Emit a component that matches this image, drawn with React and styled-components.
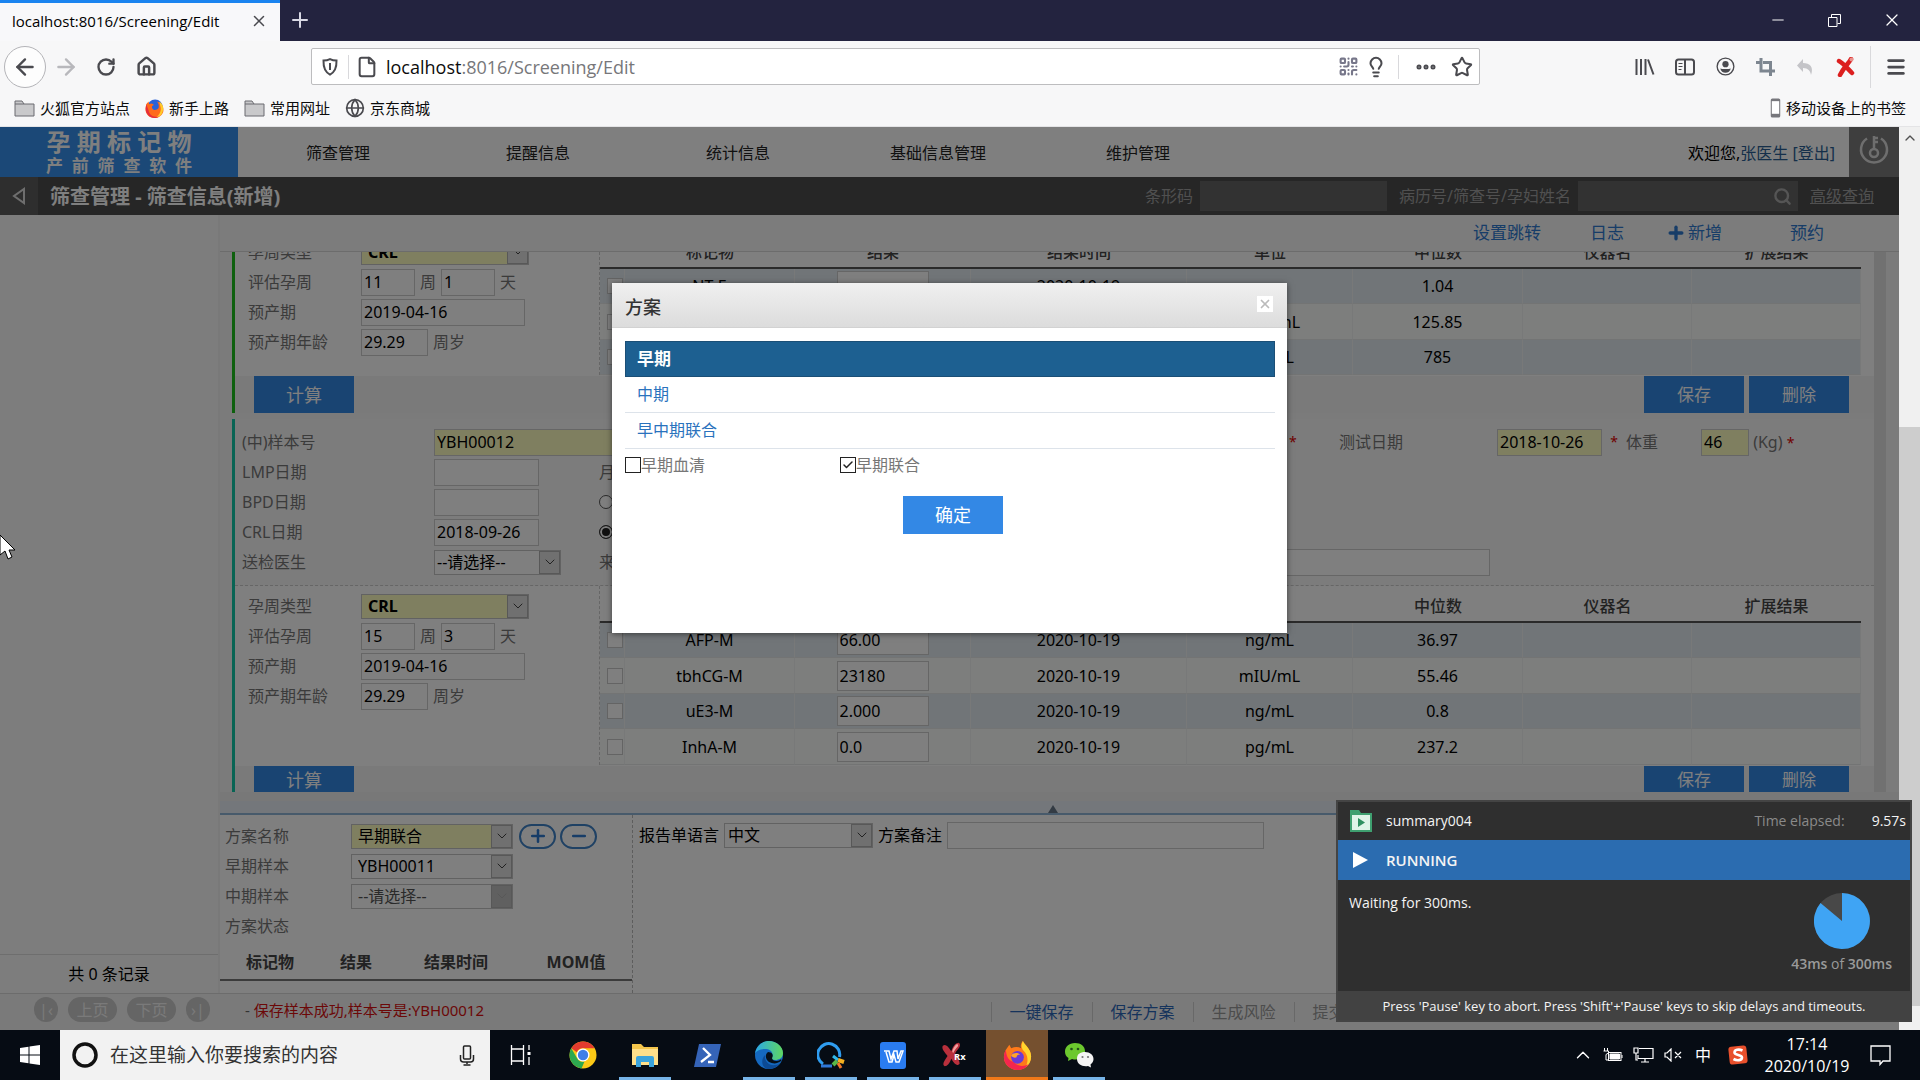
import React from "react";
import styled, { createGlobalStyle, css } from "styled-components";
import {
  ArrowLeft, ArrowRight, RotateCw, House, Star, Menu, Crop, Lightbulb, QrCode,
  File, Globe, Plus, X, Minus, Search, Mic, ChevronUp, ChevronDown, Ellipsis, Check,
} from "lucide-react";

const GlobalStyle = createGlobalStyle`
  *, *::before, *::after { box-sizing: border-box; }
  html, body { margin: 0; padding: 0; }
  body, button, input, select, table {
    font-family: "Noto Sans", "Noto Sans CJK SC", sans-serif;
    font-size: 16px;
    line-height: 20px;
  }
  button { cursor: pointer; }
  a { text-decoration: none; }
`;

const Desktop = styled.div`
  position: relative;
  display: flex;
  flex-direction: column;
  height: 100vh;
  overflow: hidden;
  background: #f7f7f8;
  color: #000;
`;

/* ---------- browser chrome ---------- */

const TabBar = styled.header`
  display: flex;
  align-items: stretch;
  height: 41px;
  background: #23233f;
`;
const Tab = styled.div`
  display: flex;
  align-items: center;
  justify-content: space-between;
  width: 280px;
  padding: 0 12px 2px;
  border-top: 3px solid #1a84f0;
  background: #f8f8fa;
  font-family: "Open Sans", "Noto Sans", sans-serif;
  font-size: 15px;
  white-space: nowrap;
`;
const ChromeButton = styled.button`
  display: inline-flex;
  align-items: center;
  justify-content: center;
  flex: none;
  width: ${(p) => p.$w || 40}px;
  height: ${(p) => p.$h || 40}px;
  padding: 0;
  border: 0;
  background: none;
  color: ${(p) => p.$color || "#4a4a4f"};
`;
const WindowControls = styled.div`
  display: flex;
  margin-left: auto;
`;
const NavBar = styled.div`
  display: flex;
  align-items: center;
  height: 51px;
  padding: 0 4px;
`;
const BackButton = styled(ChromeButton)`
  border: 1px solid #b4b4b8;
  border-radius: 50%;
  background: #fdfdfd;
`;
const AddressBar = styled.div`
  display: flex;
  align-items: center;
  flex: 1;
  height: 37px;
  margin: 0 145px;
  padding-left: 6px;
  border: 1px solid #bdbdbf;
  border-radius: 2px;
  background: #fff;
`;
const Address = styled.div`
  flex: 1;
  padding-left: 7px;
  color: #77777a;
  font-family: "Open Sans", "Noto Sans", sans-serif;
  font-size: 18px;
  line-height: 24px;
  b { font-weight: 400; color: #0c0c0d; }
`;
const ThinRule = styled.i`
  width: 1px;
  height: ${(p) => p.$h || 24}px;
  margin: 0 ${(p) => p.$gap || 0}px;
  background: #d9d9dc;
`;
const ToolGroup = styled.div`
  display: flex;
  align-items: center;
`;
const BookmarkBar = styled.nav`
  display: flex;
  align-items: center;
  gap: 15px;
  height: 35px;
  padding: 0 14px 2px;
  border-bottom: 1px solid #e4e4e6;
`;
const Bookmark = styled.a`
  display: flex;
  align-items: center;
  gap: 5px;
  margin-left: ${(p) => (p.$end ? "auto" : 0)};
  color: #0c0c0d;
  font-size: 15px;
`;

/* ---------- web page ---------- */

const Viewport = styled.div`
  display: flex;
  flex: 1;
  min-height: 0;
`;
const PageArea = styled.div`
  position: relative;
  display: flex;
  flex: 1;
  flex-direction: column;
  min-width: 0;
  background: #f8f8f8;
`;
const Scrollbar = styled.div`
  display: flex;
  flex-direction: column;
  width: 21px;
  background: #f0f0f0;
  color: #505050;
`;
const ScrollGap = styled.div`
  display: flex;
  justify-content: center;
  flex: ${(p) => p.$grow};
  padding-top: 3px;
`;
const ScrollThumb = styled.div`
  flex: 583;
  background: #cdcdcd;
`;
const AppHeader = styled.header`
  display: flex;
  align-items: stretch;
  height: 50px;
  background: #fff;
`;
const Brand = styled.div`
  display: flex;
  flex-direction: column;
  justify-content: center;
  width: 238px;
  background: #3690ee;
  color: #fff;
  font-weight: 700;
  text-align: center;
  white-space: pre;
`;
const BrandTop = styled.div`
  font-size: 24px;
  line-height: 28px;
`;
const BrandSub = styled.div`
  font-size: 17px;
  line-height: 20px;
`;
const MainNav = styled.nav`
  display: flex;
  flex: 1;
`;
const NavLink = styled.a`
  width: 200px;
  color: #222;
  line-height: 52px;
  text-align: center;
`;
const Welcome = styled.div`
  margin-right: 14px;
  line-height: 52px;
  a { color: #2a5f95; }
`;
const PowerButton = styled.button`
  width: 50px;
  padding: 0;
  border: 0;
  background: #7c7c7c;
  color: #ddd;
`;
const TitleBar = styled.div`
  display: flex;
  align-items: stretch;
  height: 38px;
  background: #4c4c4c;
  color: #a0a0a0;
  line-height: 38px;
`;
const CollapseButton = styled.button`
  display: flex;
  align-items: center;
  justify-content: center;
  width: 38px;
  padding: 0;
  border: 0;
  background: #5c5c5c;
`;
const PageTitle = styled.h1`
  flex: 1;
  margin: 0 0 0 12px;
  color: #fff;
  font-size: 20px;
  font-weight: 700;
  line-height: 40px;
`;
const SearchField = styled.label`
  display: flex;
  align-items: center;
  gap: 7px;
  margin-right: 12px;
`;
const SearchInputBox = styled.span`
  display: flex;
  align-items: center;
  width: ${(p) => p.$w}px;
  height: 30px;
  padding-right: 6px;
  background: #646464;
`;
const BareInput = styled.input`
  flex: 1;
  min-width: 0;
  height: 100%;
  border: 0;
  outline: 0;
  background: transparent;
  color: #eee;
`;
const AdvancedLink = styled.a`
  margin-right: 25px;
  color: #a0a0a0;
  text-decoration: underline;
`;

const Workspace = styled.div`
  display: grid;
  grid-template-columns: 220px 1fr;
  flex: 1;
  min-height: 0;
`;
const Sidebar = styled.aside`
  display: flex;
  flex-direction: column;
  justify-content: flex-end;
  border-right: 2px solid #f2f2f2;
  background: #fafafa;
`;
const RecordCount = styled.div`
  border-top: 1px solid #dcdcdc;
  line-height: 38px;
  text-align: center;
`;
const Main = styled.main`
  display: flex;
  flex-direction: column;
  min-width: 0;
  min-height: 0;
`;
const Toolbar = styled.div`
  display: flex;
  align-items: center;
  justify-content: flex-end;
  height: 37px;
  padding-right: 75px;
  border-bottom: 1px solid #d8d8d8;
  font-size: 17px;
`;
const ToolbarLink = styled.a`
  display: flex;
  align-items: center;
  gap: 2px;
  margin-left: ${(p) => p.$ml}px;
  color: #2f7ad0;
`;
const ScrollRegion = styled.div`
  display: grid;
  grid-template-columns: 1fr 12px 13px;
  flex: 1;
  min-height: 0;
  padding-left: 12px;
  overflow: hidden;
  background: #f6f6f6;
`;
const ScrollContent = styled.div`
  min-width: 0;
  margin-top: -20px;
`;
const ScrollTrack = styled.div`
  background: #e2e2e2;
`;
const Sample = styled.section`
  margin-bottom: 6px;
  border-left: 3px solid ${(p) => p.$accent};
  background: #fff;
`;
const SampleForm = styled.div`
  display: flex;
  flex-direction: column;
  padding: 8px 0 8px 7px;
  border-bottom: 1px dashed #ccc;
  background: #f9f9f9;
`;
const FormRow = styled.div`
  display: grid;
  grid-template-columns: ${(p) => p.$cols};
  align-items: center;
  height: 30px;
`;
const SampleBody = styled.div`
  display: grid;
  grid-template-columns: 365px 1fr;
  padding: 0 13px 1px 0;
`;
const WeekForm = styled.div`
  padding: 5px 0 0 13px;
  border-right: 1px dashed #ccc;
`;
const WeekRow = styled.div`
  display: flex;
  align-items: center;
  gap: 5px;
  height: 30px;
`;
const SampleFooter = styled.div`
  display: flex;
  gap: 5px;
  height: 37px;
  padding: 0 25px 0 19px;
  background: #f5f5f5;
`;
const Label = styled.label`
  color: #777;
  white-space: nowrap;
  ${(p) => p.$w && css`width: ${p.$w}px;`}
`;
const Field = styled.input`
  width: ${(p) => (p.$w ? p.$w + "px" : "100%")};
  height: ${(p) => p.$h || 27}px;
  padding: 0 2px;
  border: 1px solid #ccc;
  outline: 0;
  background: ${(p) => (p.$hot ? "#ffffc0" : "#fff")};
  color: #000;
`;
const Required = styled.span`
  color: #e00000;
  font-size: 14px;
  text-align: center;
`;
const FieldRequired = styled(Required)`
  padding-left: 4px;
  text-align: left;
`;
const PrimaryButton = styled.button`
  width: 100px;
  height: ${(p) => p.$h || 37}px;
  margin-right: ${(p) => (p.$push ? "auto" : 0)};
  padding: 0;
  border: 0;
  background: #3388e5;
  color: #fff;
  font-size: ${(p) => p.$size || 17}px;
`;
const SelectBox = styled.span`
  display: inline-flex;
  width: ${(p) => p.$w}px;
  height: 25px;
  border: 1px solid #c4c4c4;
  background: ${(p) => (p.$hot ? "#ffffc0" : "#fff")};
`;
const SelectNative = styled.select`
  flex: 1;
  min-width: 0;
  padding: 0 0 0 ${(p) => p.$pad || 6}px;
  border: 0;
  outline: 0;
  appearance: none;
  background: transparent;
  color: ${(p) => (p.$off ? "#555" : "#000")};
  font-weight: ${(p) => (p.$strong ? 700 : 400)};
  opacity: 1;
`;
const SelectArrow = styled.span`
  display: flex;
  align-items: center;
  justify-content: center;
  width: 21px;
  border: 1px solid #b0b0b0;
  background: ${(p) => (p.$off ? "#c0c0c0" : "#e0e0e0")};
  color: ${(p) => (p.$off ? "#b0b0b0" : "#444")};
`;
const MarkerTable = styled.table`
  width: 100%;
  border-collapse: separate;
  border-spacing: 0;
  table-layout: fixed;
  th {
    height: 37px;
    padding: 4px 0 0;
    border-bottom: 2px solid #555;
    color: #444;
    font-weight: 500;
  }
  td {
    height: 35px;
    padding: 0;
    border-right: 1px solid #f0f3f3;
    border-bottom: 1px solid #e6e9e9;
    text-align: center;
  }
  tbody tr:nth-child(odd) td { background: #e3ebf0; }
  tbody tr:nth-child(even) td { height: 36px; background: #fbfdfb; }
  tbody td:first-child { background: #f8fafa; }
`;
const MarkerCheck = styled.input`
  display: block;
  width: 16px;
  height: 16px;
  margin: 0 0 0 7px;
  border: 1px solid #c8c8c8;
  appearance: none;
  background: #fff;
`;
const Radio = styled.input`
  width: 14px;
  height: 14px;
  margin: 0;
  border: 1px solid #555;
  border-radius: 50%;
  appearance: none;
  background: #fff;
  &:checked { border-color: #333; background: #222; box-shadow: inset 0 0 0 2px #fff; }
`;
const Splitter = styled.div`
  display: flex;
  align-items: flex-end;
  justify-content: center;
  flex: none;
  height: 23px;
  padding-right: 13px;
  border-bottom: 2px solid #8fb4d6;
  background: linear-gradient(#f0f0f0 9px, #e9eff6 9px);
  color: #667788;
`;
const PlanPanel = styled.section`
  display: grid;
  grid-template-columns: 413px 1fr;
  flex: none;
  height: 178px;
  background: #fff;
`;
const PlanForm = styled.div`
  padding: 6px 0 0;
  border-right: 1px dashed #bbb;
`;
const PlanRow = styled(WeekRow)`
  gap: 6px;
  padding-left: 5px;
`;
const RoundButton = styled.button`
  display: flex;
  align-items: center;
  justify-content: center;
  width: 37px;
  height: 25px;
  margin-right: -2px;
  padding: 0;
  border: 2px solid #3f83c8;
  border-radius: 13px;
  background: #fff;
  color: #2f7ad0;
`;
const PlanTable = styled.table`
  width: 100%;
  margin-top: 1px;
  border-collapse: collapse;
  table-layout: fixed;
  th {
    height: 38px;
    padding: 3px 0 0;
    border-bottom: 2px solid #777;
    color: #444;
    font-weight: 700;
  }
`;
const PlanOptions = styled.div`
  display: flex;
  align-items: center;
  gap: 5px;
  height: 30px;
  margin: 5px 0 0 6px;
`;
const AppFooter = styled.footer`
  display: grid;
  grid-template-columns: 220px 1fr 1fr;
  align-items: center;
  height: 37px;
  border-top: 1px solid #d8d8d8;
  background: #f4f4f4;
`;
const Pager = styled.div`
  display: flex;
  align-items: center;
  gap: 10px;
  padding: 0 0 5px 34px;
`;
const PagerButton = styled.button`
  width: ${(p) => p.$w}px;
  height: 25px;
  padding: 0;
  border: 0;
  border-radius: 13px;
  background: #cacaca;
  color: #f4f4f4;
  white-space: nowrap;
`;
const StatusText = styled.div`
  padding: 0 0 4px 25px;
  color: #d81010;
  font-size: 15px;
  span { color: #666; }
`;
const FooterActions = styled.div`
  display: flex;
  margin-left: -69px;
`;
const FooterLink = styled.a`
  width: 101px;
  border-left: 1px solid #d0d0d0;
  color: ${(p) => (p.$off ? "#999" : "#2b66b8")};
  text-align: center;
`;

/* ---------- dialog ---------- */

const Backdrop = styled.div`
  position: absolute;
  inset: 0;
  display: flex;
  align-items: flex-start;
  justify-content: center;
  padding-top: 156px;
  background: rgba(0, 0, 0, 0.5);
`;
const Dialog = styled.section`
  width: 675px;
  min-height: 350px;
  background: #fff;
  box-shadow: 0 1px 6px rgba(0, 0, 0, 0.5);
`;
const DialogHeader = styled.header`
  display: flex;
  align-items: flex-start;
  justify-content: space-between;
  height: 45px;
  padding: 13px 14px 0 13px;
  border-bottom: 1px solid #d2d2d2;
  background: linear-gradient(#f0f0f0, #dcdcdc);
`;
const DialogTitle = styled.h2`
  margin: 0;
  color: #333;
  font-size: 18px;
  font-weight: 500;
  line-height: 22px;
`;
const CloseButton = styled.button`
  display: flex;
  align-items: center;
  justify-content: center;
  width: 16px;
  height: 16px;
  padding: 0;
  border: 0;
  background: #fff;
  color: #bbb;
`;
const DialogBody = styled.div`
  padding: 13px 12px 0 13px;
`;
const StageButton = styled.button`
  display: block;
  width: 100%;
  height: 36px;
  padding: 0 12px 2px;
  border: 0;
  border-bottom: 1px solid #dde3ea;
  background: none;
  color: #2a72bd;
  text-align: left;
  ${(p) => p.$active && css`
    padding: 0 11px;
    border: 1px solid #1b4f76;
    background: #1d6091;
    color: #fff;
    font-size: 17px;
    font-weight: 700;
  `}
`;
const CheckRow = styled.div`
  display: grid;
  grid-template-columns: 215px 1fr;
  margin-top: 6px;
`;
const CheckLabel = styled.label`
  display: flex;
  align-items: center;
  height: 20px;
  color: #777;
`;
const CheckBox = styled.span`
  position: relative;
  display: flex;
  width: 16px;
  height: 16px;
  input {
    width: 16px;
    height: 16px;
    margin: 0;
    border: 1px solid #222;
    appearance: none;
    background: #fff;
  }
  svg { position: absolute; inset: 2px; pointer-events: none; }
`;
const DialogActions = styled.div`
  display: flex;
  justify-content: center;
  padding: 21px 0 0 6px;
`;

/* ---------- automation popup ---------- */

const Popup = styled.aside`
  position: absolute;
  right: 8px;
  bottom: 58px;
  width: 576px;
  border: 2px solid #444;
  background: #2f2f2f;
  color: #f4f4f4;
  font-family: "Open Sans", "Noto Sans", sans-serif;
  font-size: 14px;
`;
const PopupHead = styled.div`
  display: flex;
  align-items: center;
  height: 38px;
  padding: 0 4px 0 11px;
  gap: 13px;
  span { margin-left: auto; padding-right: 14px; color: #8a8a8a; }
`;
const PopupState = styled.div`
  display: flex;
  align-items: center;
  gap: 18px;
  height: 40px;
  padding-left: 15px;
  background: #2b6cb0;
  font-size: 15px;
  font-weight: 600;
`;
const PopupBody = styled.div`
  display: flex;
  justify-content: space-between;
  height: 111px;
  padding: 13px 18px 0 11px;
`;
const Progress = styled.div`
  display: flex;
  flex-direction: column;
  align-items: center;
  gap: 5px;
  color: #9a9a9a;
  b { font-weight: 600; }
`;
const PopupFoot = styled.div`
  height: 29px;
  background: #424242;
  font-size: 13px;
  line-height: 30px;
  text-align: center;
`;

/* ---------- taskbar ---------- */

const Taskbar = styled.footer`
  display: flex;
  align-items: stretch;
  flex: none;
  height: 50px;
  background: #060c14;
  color: #fff;
`;
const TaskSearch = styled.label`
  display: flex;
  align-items: center;
  gap: 12px;
  width: 430px;
  padding: 0 15px 0 12px;
  background: #f2f2f2;
  color: #222;
  input {
    flex: 1;
    min-width: 0;
    padding: 0;
    border: 0;
    outline: 0;
    background: none;
    color: #222;
    font-size: 19px;
    line-height: 26px;
  }
  input::placeholder { color: #333; opacity: 1; }
`;
const TaskButton = styled.button`
  display: flex;
  align-items: center;
  justify-content: center;
  width: 62px;
  padding: 3px 0 0;
  border: 0;
  border-bottom: 3px solid transparent;
  border-image: ${(p) => (p.$open ? "linear-gradient(90deg, transparent 6px, #76b4e8 6px, #76b4e8 56px, transparent 56px) 1" : "none")};
  background: none;
  color: #fff;
  ${(p) => p.$current && css`
    border-image: none;
    border-bottom-color: #f07818;
    background: #75502f;
  `}
`;
const Tray = styled.div`
  display: flex;
  align-items: center;
  margin-left: auto;
  padding-right: 16px;
`;
const TrayItem = styled.span`
  display: flex;
  justify-content: center;
  width: ${(p) => p.$w || 30}px;
`;
const Clock = styled.time`
  width: 98px;
  font-family: "Open Sans", sans-serif;
  font-size: 16px;
  line-height: 22px;
  text-align: center;
`;
const Pointer = styled.svg`
  position: absolute;
  left: 0;
  top: 534px;
`;

/* ---------- small drawings ---------- */

const FolderIcon = () => (
  <svg width="21" height="18" viewBox="0 0 21 18">
    <path d="M1 2h7l2 3h10v12H1z" fill="#c9c9cb" stroke="#6b6b70" />
    <path d="M1 5h9" stroke="#6b6b70" />
  </svg>
);
const FirefoxIcon = ({ size = 20 }) => (
  <svg width={size} height={size} viewBox="0 0 32 32">
    <path d="M3 10 7 4l2 4c4-2 8-2 11 0-1-3 0-6 2-8 1 4 9 8 9 17 0 9-7 15-15 15S1 26 1 18c0-3 1-6 2-8z" fill="#ff7a1a" />
    <path d="M22 0c1 4 9 8 9 17 0 5-2 9-6 12 3-6 3-13-2-18-3-3-3-7-1-11z" fill="#ffd52e" />
    <path d="M1 18c0 8 7 14 15 14 6 0 10-3 13-7-6 4-14 3-17-2C5 22 4 16 3 10c-1 2-2 5-2 8z" fill="#f5264e" />
    <circle cx="16" cy="18" r="7" fill="#6a3ad8" />
    <path d="M9 16c3-4 8-3 10-1-3 0-4 1-4 3-2 1-5 0-6-2z" fill="#ffa52a" />
  </svg>
);
const OldFirefoxIcon = () => (
  <svg width="19" height="19" viewBox="0 0 32 32">
    <circle cx="17" cy="14" r="13" fill="#2b62d8" />
    <path d="M2 9l4-5 1 5c4-3 6-1 8 1-3 1-4 3-3 5 2 5 8 4 11 0 1-6-1-9-3-11 8 2 12 9 11 16-1 7-8 12-15 12C7 32 0 25 1 16z" fill="#ff6a1a" />
    <path d="M24 4c6 4 8 11 6 16-1 6-6 10-11 11 6-5 9-12 7-18z" fill="#ffcb2b" />
    <path d="M1 16c0 9 7 16 15 16 3 0 5 0 7-2-9 1-16-3-17-11L2 9z" fill="#e62e3a" />
  </svg>
);
const PhoneIcon = () => (
  <svg width="11" height="20" viewBox="0 0 10 19">
    <rect x="0.5" y="0.5" width="9" height="18" rx="1.5" fill="#77777c" />
    <rect x="1.5" y="3" width="7" height="12" fill="#fff" />
  </svg>
);
const ShieldIcon = () => (
  <svg width="16" height="18" viewBox="0 0 16 18" fill="none" stroke="#4a4a4f" strokeWidth="2">
    <path d="M8 1.2c2 1 4 1.400 6.500 1.400C14.700 9 13 14 8 16.600 3 14 1.300 9 1.500 2.600 4 2.600 6 2.200 8 1.200z" />
    <path d="M8 5v7" />
  </svg>
);
const LibraryIcon = () => (
  <svg width="20" height="18" viewBox="0 0 20 18" stroke="#4a4a4f" strokeWidth="2" fill="none">
    <path d="M1.500 1v16M6 1v16M10.500 1v16M13 1.500l5.500 15" />
  </svg>
);
const SidebarIcon = () => (
  <svg width="20" height="18" viewBox="0 0 20 18" fill="none" stroke="#4a4a4f" strokeWidth="2">
    <rect x="1" y="1.500" width="18" height="15" rx="2.500" />
    <path d="M10 2v14" />
    <path d="M3.500 5.500h4M3.500 8.500h4M3.500 11.500h3" strokeWidth="1.200" />
  </svg>
);
const AccountIcon = () => (
  <svg width="19" height="19" viewBox="0 0 20 20">
    <circle cx="10" cy="10" r="8.800" fill="none" stroke="#4a4a4f" strokeWidth="1.400" />
    <circle cx="10" cy="7.500" r="3.300" fill="#4a4a4f" />
    <path d="M4.500 12c2 1 9 1 11 0-.5 3-3 4.500-5.500 4.500S5 15 4.500 12z" fill="#4a4a4f" />
  </svg>
);
const CropIcon = () => (
  <svg width="19" height="18" viewBox="0 0 19 18" fill="none" stroke="#7d8690" strokeWidth="3">
    <path d="M5 0v13h9M0 4.500h4M7 4.500h7.500V18M14.500 13H19" />
  </svg>
);
const UndoIcon = () => (
  <svg width="19" height="18" viewBox="0 0 19 18">
    <path d="M7 1v4c7 0 11 4 8 12-.5-4-3-7-8-7v4L1 7.500z" fill="#c4c4c8" />
  </svg>
);
const RedXIcon = ({ rx }) => (
  <svg width={rx ? 28 : 19} height={rx ? 28 : 20} viewBox={rx ? "0 0 30 28" : "0 0 19 20"}>
    {rx ? (
      <>
        <path d="M2 4c3-2 5 0 9 6 2-5 4-9 8-9 2 1 2 4-1 7-2 2-3 4-3 6 3 4 5 6 5 9-2 3-5 2-9-5-2 5-4 8-7 8-3-2-1-5 3-11C4 11 0 7 2 4z" fill="#b8303c" />
        <path d="M16 3c2-1 3 0 2 2-2 2-4 5-5 7l-1-2c1-3 2-5 4-7z" fill="#f4a0a0" />
        <text x="14" y="19" fill="#fff" fontSize="10" fontWeight="700" fontFamily="Open Sans, sans-serif">Rx</text>
      </>
    ) : (
      <>
        <path d="M3 4c4 2 8 7 13 12M15 2C13 6 8 10 4 18" fill="none" stroke="#dc1f1f" strokeWidth="4.500" strokeLinecap="round" />
        <circle cx="15.500" cy="2.500" r="2" fill="#e8908c" />
      </>
    )}
  </svg>
);
const RestoreIcon = () => (
  <svg width="13" height="13" viewBox="0 0 13 13" fill="none" stroke="#fff">
    <path d="M.5 3.500h8.500v9H.5zM3.500 3V.5h9V9.500H9.500" />
  </svg>
);
const PowerKeyIcon = () => (
  <svg width="32" height="32" viewBox="0 0 32 32" fill="none" stroke="currentColor" strokeWidth="2.500">
    <path d="M9 4.500a13 13 0 1 0 14 0" />
    <circle cx="16" cy="19" r="4" />
    <path d="M16 15V2M16 4h4M16 8h4" />
  </svg>
);
const WindowsIcon = () => (
  <svg width="20" height="20" viewBox="0 0 20 20" fill="#fff">
    <path d="M0 3l8.500-1.200V9.500H0zM9.500 1.600 20 0v9.500H9.500zM0 10.500h8.500v7.700L0 17zM9.500 10.500H20V20L9.500 18.400z" />
  </svg>
);
const MicIcon = () => (
  <svg width="16" height="21" viewBox="0 0 16 21" fill="none" stroke="#222" strokeWidth="1.500">
    <rect x="4.500" y="1" width="7" height="13" rx="1" />
    <path d="M1.500 10v4q0 3 3 3h7q3 0 3-3v-4M8 17v2M4.500 20h7" />
  </svg>
);
const TaskViewIcon = () => (
  <svg width="22" height="20" viewBox="0 0 22 20" fill="none" stroke="#fff" strokeWidth="1.300">
    <path d="M1.500 0v4h12V0M1.500 20v-4h12v4M1.500 4v12M13.500 4v12M19 0v5M19 12v8" />
    <path d="M17.500 7h3v3h-3z" fill="#fff" stroke="none" />
  </svg>
);
const ChromeIcon = () => (
  <svg width="28" height="28" viewBox="0 0 28 28">
    <circle cx="14" cy="14" r="13.500" fill="#fbc916" />
    <path d="M14 .5a13.500 13.500 0 0 1 11.700 6.750H14a6.750 6.750 0 0 0-6.200 4L2.300 7.250A13.500 13.500 0 0 1 14 .5z" fill="#e33b2e" />
    <path d="M2.300 7.250 8.200 17.400A6.750 6.750 0 0 0 15.500 20.600L12.500 27.400A13.500 13.500 0 0 1 2.300 7.250z" fill="#2da94f" />
    <circle cx="14" cy="14" r="6.500" fill="#fff" />
    <circle cx="14" cy="14" r="5.200" fill="#3f7fe8" />
  </svg>
);
const ExplorerIcon = () => (
  <svg width="28" height="24" viewBox="0 0 28 24">
    <path d="M1 1h9l3 3h14v18H1z" fill="#f4c64c" />
    <path d="M1 6h26v16H1z" fill="#ffe08a" />
    <path d="M5 24v-9q0-2 2-2h14q2 0 2 2v9h-5v-5h-8v5z" fill="#3ba4dc" />
  </svg>
);
const PowerShellIcon = () => (
  <svg width="27" height="23" viewBox="0 0 27 23">
    <path d="M5 0h22l-5 23H0z" fill="#3564b8" />
    <path d="M9 4l7 7-9 7M14 18h6" fill="none" stroke="#fff" strokeWidth="2.300" />
  </svg>
);
const EdgeIcon = () => (
  <svg width="30" height="30" viewBox="0 0 30 30">
    <defs>
      <linearGradient id="edgeTop" x1="0" x2="1"><stop offset="0" stopColor="#2aa8e8" /><stop offset="1" stopColor="#5fd860" /></linearGradient>
    </defs>
    <circle cx="15" cy="15" r="14" fill="#1569c0" />
    <path d="M1 14C2 6 8 1 15 1s14 5 14 12c0 5-4 7-8 7-3 0-4-1-3-3 2-5-2-8-7-8S2 11 1 14z" fill="url(#edgeTop)" />
    <path d="M11 15c-1 6 4 11 10 10 3 0 5-2 6-4-2 5-7 8-12 8C8 29 6 20 11 15z" fill="#0c4a94" />
    <path d="M14 12c-3 2-3 7 1 10 4 2 8 2 12-1 1-1 0-2-1-1-3 2-8 1-8-2 2-3 0-6-4-6z" fill="#061019" />
  </svg>
);
const SearchAppIcon = () => (
  <svg width="29" height="28" viewBox="0 0 29 28" fill="none">
    <path d="M6 23A11 11 0 1 1 22.500 16" stroke="#2f9df0" strokeWidth="3" />
    <path d="M4 25h11" stroke="#2f78d8" strokeWidth="3" />
    <path d="M16 15l5 4" stroke="#30b8e8" strokeWidth="3" />
    <path d="M21 19l6 2" stroke="#f4b020" strokeWidth="4" />
    <path d="M20 20l-4 4" stroke="#58b848" strokeWidth="4" />
    <path d="M21 22l3 5" stroke="#f07828" strokeWidth="3" />
  </svg>
);
const WpsIcon = () => (
  <svg width="26" height="27" viewBox="0 0 26 27">
    <rect width="26" height="27" rx="3" fill="#2a7cf0" />
    <path d="M4 9h5l2 8 3-8h3l1 8 3-8h2l-4 11h-3l-2-7-2 7H9L6 10" fill="none" stroke="#fff" strokeWidth="1.500" />
  </svg>
);
const WeChatIcon = () => (
  <svg width="30" height="27" viewBox="0 0 30 27">
    <path d="M11 1C5 1 1 5 1 9.500c0 3 1 5 3.500 6.500L4 19l4-2c7 2 13-2 13-7.500S17 1 11 1z" fill="#6cc82e" />
    <path d="M21 10c5 0 8.500 3 8.500 7 0 2-1 4-3 5.500l.5 3-3-1.500c-6 1-11-2-11-7s3-7 8-7z" fill="#f4f4f4" />
    <g fill="#24501a"><circle cx="7.500" cy="7" r="1.300" /><circle cx="14" cy="7" r="1.300" /></g>
    <g fill="#777"><circle cx="18.500" cy="15" r="1.100" /><circle cx="24" cy="15" r="1.100" /></g>
  </svg>
);
const BatteryIcon = () => (
  <svg width="20" height="14" viewBox="0 0 20 14" fill="none" stroke="#fff">
    <rect x="5.500" y="4.500" width="12.500" height="8" />
    <path d="M7 6h9.500v5H7z" fill="#fff" /><path d="M19 7v3M1.500 0v3M4.500 0v3M.5 3h5v2L3 6.500V12h2" />
  </svg>
);
const NetworkIcon = () => (
  <svg width="21" height="16" viewBox="0 0 21 16" fill="none" stroke="#fff" strokeWidth="1.200">
    <path d="M6 1.500h14v10H5V8M8 15h8M12 12v3M1 1h4v5H1zM3 6v7h2" />
  </svg>
);
const MuteIcon = () => (
  <svg width="19" height="14" viewBox="0 0 19 14" fill="none" stroke="#fff" strokeWidth="1.200">
    <path d="M1 5h2l4-4v12L3 9H1zM11 4l6 6M17 4l-6 6" />
  </svg>
);
const SogouIcon = () => (
  <svg width="20" height="20" viewBox="0 0 20 20">
    <rect x="1" y="1" width="18" height="18" rx="3" fill="#e8502c" transform="rotate(-6 10 10)" />
    <path d="M14.500 5.500C11 4 6.500 4.500 6.500 7.500s7.500 2 7.500 5-5 3.500-8.500 1.500" fill="none" stroke="#fff" strokeWidth="2.600" />
  </svg>
);
const NoticeIcon = () => (
  <svg width="21" height="21" viewBox="0 0 21 21" fill="none" stroke="#fff" strokeWidth="1.300">
    <path d="M1 1h19v15h-7l-3 3.500V16H1z" />
  </svg>
);

/* ---------- data ---------- */

const columns = [
  ["", 25], ["标记物", 170], ["结果", 176], ["结果时间", 216],
  ["单位", 166], ["中位数", 170], ["仪器名", 169], ["扩展结果", 169],
];
const earlyMarkers = [
  ["NT-E", "", "2020-10-19", "mm", "1.04"],
  ["fbhCG-E", "", "2020-10-19", "mIU/mL", "125.85"],
  ["PAPP-A-E", "", "2020-10-19", "ng/mL", "785"],
];
const midMarkers = [
  ["AFP-M", "66.00", "2020-10-19", "ng/mL", "36.97"],
  ["tbhCG-M", "23180", "2020-10-19", "mIU/mL", "55.46"],
  ["uE3-M", "2.000", "2020-10-19", "ng/mL", "0.8"],
  ["InhA-M", "0.0", "2020-10-19", "pg/mL", "237.2"],
];
const navItems = ["筛查管理", "提醒信息", "统计信息", "基础信息管理", "维护管理"];

function Select({ id, w, hot, off, strong, pad, label, children }) {
  return (
    <SelectBox $w={w} $hot={hot}>
      <SelectNative id={id} aria-label={label} disabled={off} $off={off} $strong={strong} $pad={pad}>
        <option>{children}</option>
      </SelectNative>
      <SelectArrow $off={off}><ChevronDown size={16} strokeWidth={1.5} /></SelectArrow>
    </SelectBox>
  );
}

function Markers({ rows }) {
  return (
    <MarkerTable>
      <colgroup>{columns.map(([n, w]) => <col key={n} width={w} />)}</colgroup>
      <thead><tr>{columns.map(([n]) => <th key={n}>{n}</th>)}</tr></thead>
      <tbody>
        {rows.map(([name, value, date, unit, median]) => (
          <tr key={name}>
            <td><MarkerCheck type="checkbox" aria-label={name} /></td>
            <td>{name}</td>
            <td><Field $w={92} $h={30} defaultValue={value} aria-label={name + " 结果"} /></td>
            <td>{date}</td><td>{unit}</td><td>{median}</td><td /><td />
          </tr>
        ))}
      </tbody>
    </MarkerTable>
  );
}

function SampleDetail({ id, weeks, days, markers, buttonHeight }) {
  return (
    <>
      <SampleBody>
        <WeekForm>
          <WeekRow>
            <Label $w={108} htmlFor={id + "type"}>孕周类型</Label>
            <Select id={id + "type"} w={168} hot strong>CRL</Select>
          </WeekRow>
          <WeekRow>
            <Label $w={108} htmlFor={id + "weeks"}>评估孕周</Label>
            <Field id={id + "weeks"} $w={54} defaultValue={weeks} />
            <Label htmlFor={id + "days"}>周</Label>
            <Field id={id + "days"} $w={54} defaultValue={days} />
            <Label as="span">天</Label>
          </WeekRow>
          <WeekRow>
            <Label $w={108} htmlFor={id + "due"}>预产期</Label>
            <Field id={id + "due"} $w={164} defaultValue="2019-04-16" />
          </WeekRow>
          <WeekRow>
            <Label $w={108} htmlFor={id + "age"}>预产期年龄</Label>
            <Field id={id + "age"} $w={67} defaultValue="29.29" />
            <Label as="span">周岁</Label>
          </WeekRow>
        </WeekForm>
        <Markers rows={markers} />
      </SampleBody>
      <SampleFooter>
        <PrimaryButton $push $size={18} $h={buttonHeight}>计算</PrimaryButton>
        <PrimaryButton $h={buttonHeight}>保存</PrimaryButton>
        <PrimaryButton $h={buttonHeight}>删除</PrimaryButton>
      </SampleFooter>
    </>
  );
}

function Browser() {
  return (
    <>
      <TabBar>
        <Tab>
          localhost:8016/Screening/Edit
          <ChromeButton $w={18} $h={18} aria-label="关闭标签页"><X size={18} /></ChromeButton>
        </Tab>
        <ChromeButton $color="#d8d8e4" aria-label="新标签页"><Plus size={24} /></ChromeButton>
        <WindowControls>
          <ChromeButton $w={57} $color="#fff" aria-label="最小化"><Minus size={18} strokeWidth={1.3} /></ChromeButton>
          <ChromeButton $w={57} $color="#fff" aria-label="还原"><RestoreIcon /></ChromeButton>
          <ChromeButton $w={57} $color="#fff" aria-label="关闭"><X size={20} strokeWidth={1.5} /></ChromeButton>
        </WindowControls>
      </TabBar>
      <NavBar>
        <BackButton $w={42} $h={42} aria-label="后退"><ArrowLeft size={26} strokeWidth={2.2} /></BackButton>
        <ChromeButton $color="#b8b8bc" aria-label="前进"><ArrowRight size={26} strokeWidth={2.2} /></ChromeButton>
        <ChromeButton aria-label="刷新"><RotateCw size={20} strokeWidth={2.8} /></ChromeButton>
        <ChromeButton aria-label="主页"><House size={21} strokeWidth={2.8} /></ChromeButton>
        <AddressBar>
          <ChromeButton $w={24} $h={30} aria-label="跟踪保护"><ShieldIcon /></ChromeButton>
          <ThinRule $gap={6} />
          <ChromeButton $w={24} $h={30} aria-label="网站信息"><File size={22} strokeWidth={2.2} /></ChromeButton>
          <Address><b>localhost</b>:8016/Screening/Edit</Address>
          <ChromeButton $w={28} $h={30} aria-label="二维码" $color="#77778a"><QrCode size={21} strokeWidth={2.4} /></ChromeButton>
          <ChromeButton $w={28} $h={30} aria-label="提示"><Lightbulb size={22} strokeWidth={2.2} /></ChromeButton>
          <ThinRule $gap={8} />
          <ChromeButton $w={38} $h={30} aria-label="页面操作"><Ellipsis size={24} strokeWidth={3} /></ChromeButton>
          <ChromeButton $w={34} $h={30} aria-label="收藏"><Star size={22} strokeWidth={2.2} /></ChromeButton>
        </AddressBar>
        <ToolGroup>
          <ChromeButton aria-label="我的足迹"><LibraryIcon /></ChromeButton>
          <ChromeButton aria-label="侧栏"><SidebarIcon /></ChromeButton>
          <ChromeButton aria-label="账户"><AccountIcon /></ChromeButton>
          <ChromeButton aria-label="截图"><CropIcon /></ChromeButton>
          <ChromeButton aria-label="撤销"><UndoIcon /></ChromeButton>
          <ChromeButton aria-label="Ranorex"><RedXIcon /></ChromeButton>
          <ThinRule $h={42} $gap={5} />
          <ChromeButton aria-label="菜单"><Menu size={22} strokeWidth={3} /></ChromeButton>
        </ToolGroup>
      </NavBar>
      <BookmarkBar>
        <Bookmark href="#"><FolderIcon />火狐官方站点</Bookmark>
        <Bookmark href="#"><OldFirefoxIcon />新手上路</Bookmark>
        <Bookmark href="#"><FolderIcon />常用网址</Bookmark>
        <Bookmark href="#"><Globe size={20} color="#4a4a4f" />京东商城</Bookmark>
        <Bookmark href="#" $end><PhoneIcon />移动设备上的书签</Bookmark>
      </BookmarkBar>
    </>
  );
}

function MidSampleForm() {
  return (
    <SampleForm>
      <FormRow $cols="192px 1fr 54px 158px 105px 24px 75px 48px 125px">
        <Label htmlFor="no">(中)样本号</Label>
        <Field id="no" $hot defaultValue="YBH00012" />
        <FieldRequired>*</FieldRequired>
        <Label htmlFor="test">测试日期</Label>
        <Field id="test" $hot defaultValue="2018-10-26" />
        <Required>*</Required>
        <Label htmlFor="weight">体重</Label>
        <Field id="weight" $hot defaultValue="46" />
        <Label as="span">&nbsp;(Kg) <Required>*</Required></Label>
      </FormRow>
      <FormRow $cols="192px 105px 60px 1fr">
        <Label htmlFor="lmp">LMP日期</Label><Field id="lmp" /><i /><Label as="span">月</Label>
      </FormRow>
      <FormRow $cols="192px 105px 60px 1fr">
        <Label htmlFor="bpd">BPD日期</Label><Field id="bpd" /><i /><Radio type="radio" name="basis" aria-label="BPD" />
      </FormRow>
      <FormRow $cols="192px 105px 60px 1fr">
        <Label htmlFor="crl">CRL日期</Label><Field id="crl" defaultValue="2018-09-26" /><i />
        <Radio type="radio" name="basis" aria-label="CRL" defaultChecked />
      </FormRow>
      <FormRow $cols="192px 127px 38px 191px 1fr 384px">
        <Label htmlFor="doctor">送检医生</Label>
        <Select id="doctor" w={127} pad={2}>--请选择--</Select>
        <i /><Label htmlFor="source">来</Label><Field id="source" /><i />
      </FormRow>
    </SampleForm>
  );
}

function PlanDialog() {
  return (
    <Backdrop>
      <Dialog role="dialog" aria-label="方案">
        <DialogHeader>
          <DialogTitle>方案</DialogTitle>
          <CloseButton aria-label="关闭"><X size={14} strokeWidth={3} /></CloseButton>
        </DialogHeader>
        <DialogBody>
          <StageButton $active>早期</StageButton>
          <StageButton>中期</StageButton>
          <StageButton>早中期联合</StageButton>
          <CheckRow>
            <CheckLabel>
              <CheckBox><input type="checkbox" /></CheckBox>早期血清
            </CheckLabel>
            <CheckLabel>
              <CheckBox><input type="checkbox" defaultChecked /><Check size={12} color="#222" strokeWidth={3} /></CheckBox>早期联合
            </CheckLabel>
          </CheckRow>
          <DialogActions><PrimaryButton $h={38} $size={18}>确定</PrimaryButton></DialogActions>
        </DialogBody>
      </Dialog>
    </Backdrop>
  );
}

function ScreeningPage() {
  return (
    <PageArea>
      <AppHeader>
        <Brand>
          <BrandTop>孕 期 标 记 物</BrandTop>
          <BrandSub>{"产  前  筛  查  软  件"}</BrandSub>
        </Brand>
        <MainNav>{navItems.map((n) => <NavLink href="#" key={n}>{n}</NavLink>)}</MainNav>
        <Welcome>欢迎您,<a href="#">张医生</a> <a href="#">[登出]</a></Welcome>
        <PowerButton aria-label="密钥"><PowerKeyIcon /></PowerButton>
      </AppHeader>
      <TitleBar>
        <CollapseButton aria-label="收起">
          <svg width="14" height="18" viewBox="0 0 14 18"><path d="M12 2v14L2 9z" fill="none" stroke="#ddd" strokeWidth="2" /></svg>
        </CollapseButton>
        <PageTitle>筛查管理 - 筛查信息(新增)</PageTitle>
        <SearchField>条形码<SearchInputBox $w={187}><BareInput /></SearchInputBox></SearchField>
        <SearchField>病历号/筛查号/孕妇姓名
          <SearchInputBox $w={220}><BareInput /><Search size={19} color="#aaa" strokeWidth={3} /></SearchInputBox>
        </SearchField>
        <AdvancedLink href="#">高级查询</AdvancedLink>
      </TitleBar>
      <Workspace>
        <Sidebar><RecordCount>共 0 条记录</RecordCount></Sidebar>
        <Main>
          <Toolbar>
            <ToolbarLink href="#">设置跳转</ToolbarLink>
            <ToolbarLink href="#" $ml={49}>日志</ToolbarLink>
            <ToolbarLink href="#" $ml={42}><Plus size={20} strokeWidth={4} />新增</ToolbarLink>
            <ToolbarLink href="#" $ml={68}>预约</ToolbarLink>
          </Toolbar>
          <ScrollRegion>
            <ScrollContent>
              <Sample $accent="#1cc01c">
                <SampleDetail id="early" weeks="11" days="1" markers={earlyMarkers} />
              </Sample>
              <Sample $accent="#10c8a8">
                <MidSampleForm />
                <SampleDetail id="mid" weeks="15" days="3" markers={midMarkers} buttonHeight={27} />
              </Sample>
            </ScrollContent>
            <ScrollTrack />
          </ScrollRegion>
          <Splitter>
            <svg width="10" height="8" viewBox="0 0 10 8"><path d="M5 0l5 8H0z" fill="currentColor" /></svg>
          </Splitter>
          <PlanPanel>
            <PlanForm>
              <PlanRow>
                <Label $w={120} htmlFor="plan">方案名称</Label>
                <Select id="plan" w={162} hot>早期联合</Select>
                <RoundButton aria-label="添加方案"><Plus size={20} strokeWidth={3} /></RoundButton>
                <RoundButton aria-label="移除方案"><Minus size={20} strokeWidth={3} /></RoundButton>
              </PlanRow>
              <PlanRow>
                <Label $w={120} htmlFor="earlySample">早期样本</Label>
                <Select id="earlySample" w={162}>YBH00011</Select>
              </PlanRow>
              <PlanRow>
                <Label $w={120} htmlFor="midSample">中期样本</Label>
                <Select id="midSample" w={162} off>--请选择--</Select>
              </PlanRow>
              <PlanRow><Label as="span">方案状态</Label></PlanRow>
              <PlanTable>
                <colgroup><col width="100" /><col width="72" /><col width="128" /><col width="112" /></colgroup>
                <thead><tr><th>标记物</th><th>结果</th><th>结果时间</th><th>MOM值</th></tr></thead>
              </PlanTable>
            </PlanForm>
            <PlanOptions>
              <label htmlFor="lang">报告单语言</label>
              <Select id="lang" w={149} pad={3}>中文</Select>
              <label htmlFor="note">方案备注</label>
              <Field id="note" $w={317} />
            </PlanOptions>
          </PlanPanel>
        </Main>
      </Workspace>
      <AppFooter>
        <Pager>
          <PagerButton $w={24} aria-label="首页">|‹</PagerButton>
          <PagerButton $w={49}>上页</PagerButton>
          <PagerButton $w={49}>下页</PagerButton>
          <PagerButton $w={24} aria-label="末页">›|</PagerButton>
        </Pager>
        <StatusText><span>- </span>保存样本成功,样本号是:YBH00012</StatusText>
        <FooterActions>
          <FooterLink href="#">一键保存</FooterLink>
          <FooterLink href="#">保存方案</FooterLink>
          <FooterLink href="#" $off>生成风险</FooterLink>
          <FooterLink href="#" $off>提交风险</FooterLink>
        </FooterActions>
      </AppFooter>
      <PlanDialog />
    </PageArea>
  );
}

function RunnerPopup() {
  return (
    <Popup>
      <PopupHead>
        <svg width="24" height="24" viewBox="0 0 24 24">
          <path d="M1 1h9l2 3h11v19H1z" fill="#3fa070" /><rect x="3" y="6" width="18" height="15" fill="#dff4e8" />
          <path d="M9 9l7 4.500L9 18z" fill="#2f8f60" />
        </svg>
        summary004<span>Time elapsed:</span>9.57s
      </PopupHead>
      <PopupState>
        <svg width="15" height="16" viewBox="0 0 15 16"><path d="M0 0l15 8L0 16z" fill="#fff" /></svg>
        RUNNING
      </PopupState>
      <PopupBody>
        Waiting for 300ms.
        <Progress>
          <svg width="56" height="56" viewBox="0 0 56 56">
            <circle cx="28" cy="28" r="28" fill="#484848" />
            <path d="M28 28V0a28 28 0 1 1-21.500 10z" fill="#3fa4f4" />
          </svg>
          <div><b>43ms</b> of <b>300ms</b></div>
        </Progress>
      </PopupBody>
      <PopupFoot>Press 'Pause' key to abort. Press 'Shift'+'Pause' keys to skip delays and timeouts.</PopupFoot>
    </Popup>
  );
}

function SystemTaskbar() {
  return (
    <Taskbar>
      <ChromeButton $w={60} $h={50} aria-label="开始"><WindowsIcon /></ChromeButton>
      <TaskSearch>
        <svg width="26" height="28" viewBox="0 0 26 28"><circle cx="13" cy="14" r="11" fill="none" stroke="#111" strokeWidth="3.500" /></svg>
        <input placeholder="在这里输入你要搜索的内容" aria-label="搜索" />
        <MicIcon />
      </TaskSearch>
      <TaskButton aria-label="任务视图"><TaskViewIcon /></TaskButton>
      <TaskButton aria-label="Chrome"><ChromeIcon /></TaskButton>
      <TaskButton $open aria-label="文件资源管理器"><ExplorerIcon /></TaskButton>
      <TaskButton aria-label="PowerShell"><PowerShellIcon /></TaskButton>
      <TaskButton $open aria-label="Edge"><EdgeIcon /></TaskButton>
      <TaskButton $open aria-label="Search"><SearchAppIcon /></TaskButton>
      <TaskButton $open aria-label="WPS"><WpsIcon /></TaskButton>
      <TaskButton $open aria-label="Ranorex"><RedXIcon rx /></TaskButton>
      <TaskButton $open $current aria-label="Firefox"><FirefoxIcon size={29} /></TaskButton>
      <TaskButton $open aria-label="WeChat"><WeChatIcon /></TaskButton>
      <Tray>
        <TrayItem><ChevronUp size={22} strokeWidth={1.5} /></TrayItem>
        <TrayItem><BatteryIcon /></TrayItem>
        <TrayItem><NetworkIcon /></TrayItem>
        <TrayItem><MuteIcon /></TrayItem>
        <TrayItem>中</TrayItem>
        <TrayItem $w={40}><SogouIcon /></TrayItem>
        <Clock>17:14<br />2020/10/19</Clock>
        <TrayItem $w={48}><NoticeIcon /></TrayItem>
      </Tray>
    </Taskbar>
  );
}

export default function App() {
  return (
    <Desktop>
      <GlobalStyle />
      <Browser />
      <Viewport>
        <ScreeningPage />
        <Scrollbar>
          <ScrollGap $grow={299}><ChevronUp size={16} /></ScrollGap>
          <ScrollThumb />
          <ScrollGap $grow={21} />
        </Scrollbar>
      </Viewport>
      <SystemTaskbar />
      <RunnerPopup />
      <Pointer width="15" height="26" viewBox="0 0 15 26">
        <path d="M0 1v20l5-4 3 8 4-2-3-7h6z" fill="#fff" stroke="#000" />
      </Pointer>
    </Desktop>
  );
}
